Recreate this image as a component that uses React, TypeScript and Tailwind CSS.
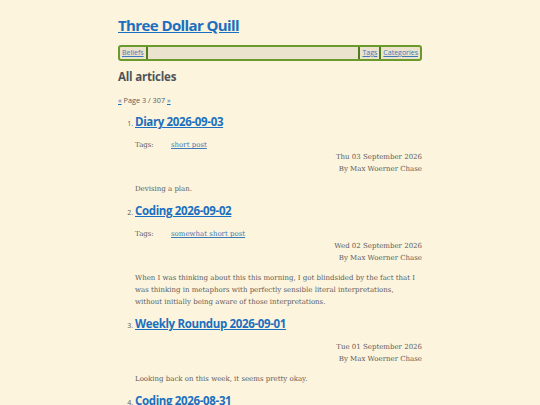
import React from "react";

const serif = { fontFamily: '"DejaVu Serif", serif' };

type Item = {
  n: number;
  title: string;
  tag?: string;
  date: string;
  para: string[];
};

const items: Item[] = [
  { n: 1, title: "Diary 2026-09-03", tag: "short post", date: "Thu 03 September 2026", para: ["Devising a plan."] },
  {
    n: 2,
    title: "Coding 2026-09-02",
    tag: "somewhat short post",
    date: "Wed 02 September 2026",
    para: [
      "When I was thinking about this this morning, I got blindsided by the fact that I was thinking in metaphors with perfectly sensible literal interpretations, without initially being aware of those interpretations.",
    ],
  },
  { n: 3, title: "Weekly Roundup 2026-09-01", date: "Tue 01 September 2026", para: ["Looking back on this week, it seems pretty okay."] },
  { n: 4, title: "Coding 2026-08-31", date: "Mon 31 August 2026", para: ["Stuff."] },
];

export default function App() {
  return (
    <div className="min-h-[405px] w-full bg-[#fcf4dc] text-[#5c5c5c]" style={{ fontFamily: '"Open Sans", sans-serif' }}>
      <div className="mx-auto w-[304px] pt-[14px]">
        <h1 className="text-[15px] font-bold leading-[22px] tracking-[-0.6px]">
          <a href="#" className="text-[#1b6fc0] underline">Three Dollar Quill</a>
        </h1>
        <nav className="mt-[9px] flex h-[16px] items-stretch rounded-[3px] border-2 border-[#6a9a2c] bg-[#ebe3cd] text-[7px] font-medium leading-[12px]">
          <a href="#" className="border-r-2 border-[#4e7d1c] px-[2px] text-[#3d7ab8] underline">Beliefs</a>
          <div className="flex-1" />
          <a href="#" className="border-l-2 border-[#4e7d1c] px-[2px] text-[#3d7ab8] underline">Tags</a>
          <a href="#" className="border-l-2 border-[#4e7d1c] px-[2px] text-[#3d7ab8] underline">Categories</a>
        </nav>
        <h2 className="mt-[8px] text-[11.5px] font-bold leading-[16px] text-[#4d5359] tracking-[-0.2px]">All articles</h2>
        <p className="mt-[9px] text-[7.3px] leading-[12px]">
          <a href="#" className="text-[#1b6fc0] underline">«</a> Page 3 / 307{" "}
          <a href="#" className="text-[#1b6fc0] underline">»</a>
        </p>
        <ol className="mt-[8px]">
          {items.map((it) => (
            <li key={it.n} className="mb-[8px] pl-[17px]">
              <div className="-ml-[17px] flex items-baseline">
                <span className="w-[17px] pr-[2px] text-right text-[7px]">{it.n}.</span>
                <h3 className="text-[11.5px] font-bold leading-[16px] tracking-[-0.35px]">
                  <a href="#" className="text-[#1b6fc0] underline">{it.title}</a>
                </h3>
              </div>
              <div className="mt-[9px] text-[7px] leading-[12px]" style={serif}>
                {it.tag && (
                  <div className="flex">
                    <span className="w-[36px]">Tags:</span>
                    <a href="#" className="text-[#3d7ab8] underline">{it.tag}</a>
                  </div>
                )}
                <div className="text-right">{it.date}</div>
                <div className="text-right">By Max Woerner Chase</div>
              </div>
              <div className="mt-[8px] text-[7px] leading-[12px]" style={serif}>
                {it.para.map((p, i) => (
                  <p key={i}>{p}</p>
                ))}
              </div>
            </li>
          ))}
        </ol>
      </div>
    </div>
  );
}
